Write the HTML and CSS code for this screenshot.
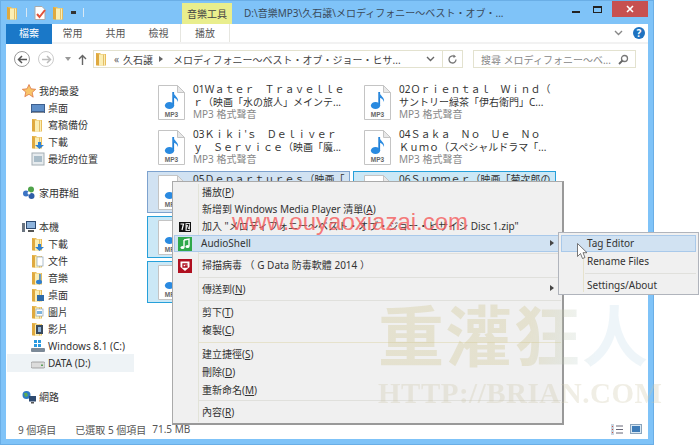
FILE: index.html
```html
<!DOCTYPE html>
<html lang="zh-Hant">
<head>
  <meta charset="UTF-8">
  <title>音樂工具</title>
  <link rel="stylesheet" href="styles.css">
</head>
<body>

  <svg class="defs" width="0" height="0">
    <symbol id="folder" viewBox="0 0 14 14">
      <path d="M1 1h4l1 1h5v11.500H1z" fill="#e9bd5c"/>
      <path d="M4 2.500h6v11H4z" fill="#fbeeb4"/>
      <path d="M1 1l3 1.500v11l-3-.5z" fill="#dfa93f"/>
      <path d="M8.500 2.500v11" stroke="#e3bf6a" stroke-width="1"/>
    </symbol>
    <symbol id="mp3" viewBox="0 0 27 35">
      <path d="M.5.500h19l7 7v27H.5z" fill="#fff" stroke="#c4c4c4"/>
      <path d="M19.500.500v7h7z" fill="#e8e8e8" stroke="#c4c4c4"/>
      <path d="M15.200 7v14" stroke="#1f7fd6" stroke-width="1.800" fill="none"/>
      <path d="M15 7c1 4 6 5 5 10-1-3-3-4-5-4.500z" fill="#2a8ae0"/>
      <ellipse cx="11.500" cy="20.500" rx="4.600" ry="3.600" fill="#2a8ae0"/>
      <text x="13.500" y="32" class="mp3-label">MP3</text>
    </symbol>
  </svg>

  <div class="window">
    <div class="titlebar">
      <div class="quick">
        <svg class="ico"><use href="#folder"/></svg>
        <span class="qbar"></span>
        <svg class="ico" viewBox="0 0 14 14"><path d="M2 .5h7l3 3v10H2z" fill="#fff" stroke="#aaa"/><path d="M4 8l2.500 3L12 4" stroke="#e0523a" stroke-width="2" fill="none"/></svg>
        <svg class="ico"><use href="#folder"/></svg>
        <span class="qdrop"></span>
        <span class="qbar"></span>
      </div>
      <div class="tool-tab">音樂工具</div>
      <div class="title">D:\音樂MP3\久石譲\メロディフォニー～ベスト・オブ・...</div>
      <div class="controls">
        <span class="btn-min"></span>
        <span class="btn-max"></span>
        <span class="btn-close">
          <svg width="8" height="8" viewBox="0 0 8 8"><path d="M1 1l6 6M7 1L1 7" stroke="#fff" stroke-width="1.600"/></svg>
        </span>
      </div>
    </div>

    <div class="inner">
      <div class="tabs">
        <div class="tab tab-file">檔案</div>
        <div class="tab">常用</div>
        <div class="tab">共用</div>
        <div class="tab">檢視</div>
        <div class="tab tab-play">播放</div>
        <svg class="ribbon-chev" width="9" height="6" viewBox="0 0 9 6"><path d="M1 1l3.500 3.500L8 1" stroke="#888" stroke-width="1.400" fill="none"/></svg>
        <span class="help">?</span>
      </div>

      <div class="navrow">
        <span class="nav-circle"><svg width="11" height="9" viewBox="0 0 11 9"><path d="M5 1L1.500 4.500 5 8M2 4.500h8" stroke="#555" stroke-width="1.500" fill="none"/></svg></span>
        <span class="nav-circle nav-off"><svg width="11" height="9" viewBox="0 0 11 9"><path d="M6 1l3.500 3.500L6 8M9 4.500H1" stroke="#bbb" stroke-width="1.500" fill="none"/></svg></span>
        <span class="nav-drop"></span>
        <svg class="nav-up" width="9" height="11" viewBox="0 0 9 11"><path d="M1 5l3.500-3.500L8 5M4.500 2v9" stroke="#666" stroke-width="1.400" fill="none"/></svg>
        <div class="address">
          <svg class="ico"><use href="#folder"/></svg>
          <span class="crumb-more">«</span>
          <span>久石譲</span>
          <span class="crumb-arrow"></span>
          <span class="crumb-long">メロディフォニー～ベスト・オブ・ジョー・ヒサ...</span>
          <svg class="addr-chev" width="9" height="6" viewBox="0 0 9 6"><path d="M1 1l3.500 3.500L8 1" stroke="#666" stroke-width="1.400" fill="none"/></svg>
          <span class="addr-refresh">
            <svg width="11" height="11" viewBox="0 0 11 11"><path d="M9 5.500A3.500 3.500 0 1 1 7.500 2.600" stroke="#777" stroke-width="1.300" fill="none"/><path d="M6.500.5l2.500 2-2.500 1.500z" fill="#777"/></svg>
          </span>
        </div>
        <div class="search">
          <span>搜尋 メロディフォニー～ベ...</span>
          <svg width="11" height="11" viewBox="0 0 11 11"><circle cx="6.500" cy="4.500" r="3" stroke="#777" stroke-width="1.300" fill="none"/><path d="M4.500 6.500L1 10" stroke="#666" stroke-width="1.800"/></svg>
        </div>
      </div>

      <div class="panes">
        <div class="sidebar">
          <div class="side-row head">
            <svg class="ico" viewBox="0 0 14 14"><path d="M7 .5l2 4.300 4.700.5-3.500 3.200 1 4.700L7 10.300l-4.200 2.400 1-4.700L.3 5.300 5 4.800z" fill="#f8c56a" stroke="#d9683a" stroke-width=".7"/></svg>
            <span>我的最愛</span>
          </div>
          <div class="side-row">
            <svg class="ico" viewBox="0 0 14 14"><rect y="3" width="14" height="9" fill="#3d5f8e"/><rect x="1" y="4" width="12" height="6" fill="#5f8fc8"/><rect x="1" y="11" width="12" height="1" fill="#8a8f96"/></svg>
            <span>桌面</span>
          </div>
          <div class="side-row"><svg class="ico"><use href="#folder"/></svg><span>寫稿備份</span></div>
          <div class="side-row">
            <svg class="ico" viewBox="0 0 14 14"><use href="#folder" width="14" height="14"/><path d="M7 7h3v3h3l-4.500 4L4 10h3z" fill="#2f80d0"/></svg>
            <span>下載</span>
          </div>
          <div class="side-row">
            <svg class="ico" viewBox="0 0 14 14"><rect x="1" y="1" width="12" height="12" fill="#e6ebee" stroke="#a4aeb4"/><rect x="3" y="4" width="8" height="6" fill="#a9bcc8"/></svg>
            <span>最近的位置</span>
          </div>

          <div class="side-row head gap">
            <svg class="ico" viewBox="0 0 14 14"><circle cx="4" cy="7.500" r="3" fill="#3c74c4"/><circle cx="9" cy="3.500" r="3" fill="#4fa34a"/><circle cx="9.500" cy="10" r="3" fill="#2e5da8"/><circle cx="7" cy="7" r="1.500" fill="#fff"/></svg>
            <span>家用群組</span>
          </div>

          <div class="side-row head gap">
            <svg class="ico" viewBox="0 0 14 14"><rect x="4" y="1" width="10" height="8" fill="#2e4a70"/><rect x="5" y="2" width="8" height="6" fill="#8fb4dc"/><rect x="6" y="10" width="6" height="2" fill="#555"/><rect y="3" width="3" height="9" fill="#6a7480"/></svg>
            <span>本機</span>
          </div>
          <div class="side-row">
            <svg class="ico" viewBox="0 0 14 14"><use href="#folder" width="14" height="14"/><path d="M7 7h3v3h3l-4.500 4L4 10h3z" fill="#2f80d0"/></svg>
            <span>下載</span>
          </div>
          <div class="side-row">
            <svg class="ico" viewBox="0 0 14 14"><use href="#folder" width="14" height="14"/><rect x="6" y="3" width="6" height="9" fill="#fff" stroke="#8ea4b8" stroke-width=".7"/></svg>
            <span>文件</span>
          </div>
          <div class="side-row">
            <svg class="ico" viewBox="0 0 14 14"><use href="#folder" width="14" height="14"/><path d="M9 3v8" stroke="#2f80d0" stroke-width="1.400"/><ellipse cx="8" cy="11" rx="3" ry="2.200" fill="#2f80d0"/></svg>
            <span>音樂</span>
          </div>
          <div class="side-row">
            <svg class="ico" viewBox="0 0 14 14"><use href="#folder" width="14" height="14"/><rect x="6" y="7" width="7" height="6" fill="#2e6aa8"/></svg>
            <span>桌面</span>
          </div>
          <div class="side-row">
            <svg class="ico" viewBox="0 0 14 14"><use href="#folder" width="14" height="14"/><rect x="5" y="4" width="7" height="7" fill="#fff" stroke="#8ea4b8" stroke-width=".7"/><rect x="6" y="6" width="5" height="3" fill="#7db4e0"/></svg>
            <span>圖片</span>
          </div>
          <div class="side-row">
            <svg class="ico" viewBox="0 0 14 14"><use href="#folder" width="14" height="14"/><rect x="5" y="3" width="7" height="9" fill="#3a4a5c"/><rect x="7" y="5" width="3" height="5" fill="#8fb4dc"/></svg>
            <span>影片</span>
          </div>
          <div class="side-row">
            <svg class="ico" viewBox="0 0 14 14"><path d="M3 1h3v3H3zM7 1h3v3H7zM3 5h3v3H3zM7 5h3v3H7z" fill="#2a9ae0"/><rect y="9" width="14" height="4" rx="1" fill="#7c8a98"/></svg>
            <span>Windows 8.1 (C:)</span>
          </div>
          <div class="side-row current">
            <svg class="ico" viewBox="0 0 14 14"><rect y="6" width="14" height="6" rx="1.500" fill="#dcdcdc" stroke="#888" stroke-width=".7"/><rect x="10" y="8.500" width="2" height="1.500" fill="#5aa05a"/></svg>
            <span>DATA (D:)</span>
          </div>

          <div class="side-row head gap">
            <svg class="ico" viewBox="0 0 14 14"><circle cx="4.500" cy="5" r="4" fill="#2e7cc4"/><path d="M2 3l3 0 1 3-3 1z" fill="#5cac54"/><rect x="7" y="6" width="7" height="5.500" fill="#2e4a70"/><rect x="9" y="12" width="3" height="1.500" fill="#555"/></svg>
            <span>網路</span>
          </div>
        </div>

        <div class="files">
          <div class="tile">
            <svg class="mp3"><use href="#mp3"/></svg>
            <div class="tile-text">
              <div>01Ｗａｔｅｒ　Ｔｒａｖｅｌｌｅ</div>
              <div>ｒ（映画「水の旅人」メインテ...</div>
              <div class="type">MP3 格式聲音</div>
            </div>
          </div>
          <div class="tile">
            <svg class="mp3"><use href="#mp3"/></svg>
            <div class="tile-text">
              <div>02Ｏｒｉｅｎｔａｌ　Ｗｉｎｄ（</div>
              <div>サントリー緑茶「伊右衛門」C...</div>
              <div class="type">MP3 格式聲音</div>
            </div>
          </div>
          <div class="tile">
            <svg class="mp3"><use href="#mp3"/></svg>
            <div class="tile-text">
              <div>03Ｋｉｋｉ'ｓ　Ｄｅｌｉｖｅｒ</div>
              <div>ｙ　Ｓｅｒｖｉｃｅ（映画「魔...</div>
              <div class="type">MP3 格式聲音</div>
            </div>
          </div>
          <div class="tile">
            <svg class="mp3"><use href="#mp3"/></svg>
            <div class="tile-text">
              <div>04Ｓａｋａ　Ｎｏ　Ｕｅ　Ｎｏ</div>
              <div>Ｋｕｍｏ（スペシャルドラマ「...</div>
              <div class="type">MP3 格式聲音</div>
            </div>
          </div>
          <div class="tile focus">
            <svg class="mp3"><use href="#mp3"/></svg>
            <div class="tile-text">
              <div>05Ｄｅｐａｒｔｕｒｅｓ（映画「</div>
            </div>
          </div>
          <div class="tile selected">
            <svg class="mp3"><use href="#mp3"/></svg>
            <div class="tile-text">
              <div>06Ｓｕｍｍｅｒ（映画「菊次郎の</div>
            </div>
          </div>
          <div class="tile selected"><svg class="mp3"><use href="#mp3"/></svg></div>
          <div class="tile selected"><svg class="mp3"><use href="#mp3"/></svg></div>
          <div class="tile selected"><svg class="mp3"><use href="#mp3"/></svg></div>
        </div>
      </div>

      <div class="status">
        <span>9 個項目</span>
        <span class="status-sel">已選取 5 個項目</span>
        <span>71.5 MB</span>
        <div class="views">
          <svg width="12" height="11" viewBox="0 0 12 11"><path d="M0 0h3v11H0z" fill="#c8d4e0"/><path d="M1 2h1v1H1zM1 5h1v1H1zM1 8h1v1H1z" fill="#d05040"/><path d="M5 2h7M5 5.500h7M5 9h7" stroke="#667" stroke-width="1"/></svg>
          <svg width="12" height="10" viewBox="0 0 12 10"><rect x=".5" y=".5" width="11" height="9" fill="#d8e8f4" stroke="#8aa4bc"/><rect x="2" y="2" width="8" height="6" fill="#3e7cb8"/></svg>
        </div>
      </div>
    </div>
  </div>

  <div class="menu">
    <div class="menu-row">播放(<u>P</u>)</div>
    <div class="menu-row">新增到 Windows Media Player 清單(<u>A</u>)</div>
    <div class="menu-row">
      <svg class="menu-ico" viewBox="0 0 14 14"><rect x="1" y="2" width="12" height="10" fill="#111"/><rect x="7.500" y="3" width="4.500" height="8" fill="#ddd"/><path d="M2.500 4h3L4 10" stroke="#fff" stroke-width="1.200" fill="none"/><path d="M8.500 4.500h2.500L9 9.500h2.500" stroke="#111" stroke-width="1" fill="none"/></svg>
      加入 "メロディフォニー～ベスト・オブ・ジョー・ヒサイシ Disc 1.zip"
    </div>
    <div class="menu-row active">
      <svg class="menu-ico" viewBox="0 0 14 14"><rect width="14" height="14" fill="#2fa84a"/><path d="M6 3l5-1v7" stroke="#fff" stroke-width="1.400" fill="none"/><path d="M6 3v7" stroke="#fff" stroke-width="1.400"/><ellipse cx="4.500" cy="10.500" rx="2" ry="1.500" fill="#fff"/><ellipse cx="9.500" cy="9.500" rx="2" ry="1.500" fill="#fff"/></svg>
      <span class="audio-label">AudioShell</span>
      <span class="arrow"></span>
    </div>
    <div class="menu-sep"></div>
    <div class="menu-row scan">
      <svg class="menu-ico" viewBox="0 0 14 14"><rect width="14" height="14" fill="#b01020"/><path d="M2.500 2.500h9v5.500L7 12 2.500 8z" fill="#fff"/><path d="M9.500 5H5v3h4V7H7" stroke="#b01020" stroke-width="1.300" fill="none"/></svg>
      掃描病毒 （ G Data 防毒軟體 2014 ）
    </div>
    <div class="menu-sep"></div>
    <div class="menu-row send">傳送到(<u>N</u>)<span class="arrow"></span></div>
    <div class="menu-sep"></div>
    <div class="menu-row tall">剪下(<u>T</u>)</div>
    <div class="menu-row tall">複製(<u>C</u>)</div>
    <div class="menu-sep sep-wide"></div>
    <div class="menu-row tall">建立捷徑(<u>S</u>)</div>
    <div class="menu-row tall">刪除(<u>D</u>)</div>
    <div class="menu-row tall">重新命名(<u>M</u>)</div>
    <div class="menu-sep"></div>
    <div class="menu-row last">內容(<u>R</u>)</div>
  </div>

  <div class="submenu">
    <div class="sub-row active">Tag Editor</div>
    <div class="sub-row">Rename Files</div>
    <div class="sub-sep"></div>
    <div class="sub-row">Settings/About</div>
  </div>

  <svg class="cursor" width="11" height="17" viewBox="0 0 11 17"><path d="M.5.500v13l3-3 2 5 2.500-1-2-4.800h4z" fill="#fff" stroke="#555" stroke-width=".8"/></svg>

  <div class="mark-red">www.ouyaoxiazai.com</div>
  <div class="mark-brian">重灌狂人</div>
  <div class="mark-url">HTTP://BRIAN.COM</div>

</body>
</html>
```

FILE: styles.css
```css
* { box-sizing: border-box; }
html, body { margin: 0; height: 100%; }
body {
  position: relative;
  width: 700px;
  height: 446px;
  overflow: hidden;
  background: #fff;
  font-family: "Noto Sans", "Noto Sans CJK TC", sans-serif;
  font-size: 10px;
  color: #333;
  filter: blur(.35px);
}
.defs { position: absolute; }
.ico { width: 14px; height: 14px; flex: none; }
.mp3-label { font: bold 6.500px "Liberation Sans", sans-serif; fill: #666; text-anchor: middle; }

.window {
  width: 654px;
  height: 445px;
  background: #7fc3f8;
  border: 1px solid #6aaee6;
  display: flex;
  flex-direction: column;
}

/* title bar */
.titlebar { height: 23px; display: flex; flex: none; }
.quick { width: 181px; display: flex; align-items: center; gap: 5px; padding-left: 5px; }
.qbar { width: 1px; height: 9px; background: #d8e8f4; margin: 0 1px; }
.qdrop { width: 5px; height: 3px; border-top: 3px solid #333; margin-right: 1px; }
.tool-tab {
  width: 50px;
  margin-top: 2px;
  background: #e9ee8d;
  text-align: center;
  line-height: 22px;
  color: #444;
}
.title { margin-left: 12px; line-height: 24px; color: #3a4a5a; white-space: nowrap; }
.controls { margin-left: auto; margin-right: 5px; display: flex; height: 16px; }
.btn-min { width: 8px; height: 2px; background: #222; margin: 10px 13px 0 0; }
.btn-max { width: 9px; height: 7px; border: 1px solid #222; border-top-width: 2px; margin: 5px 10px 0 0; }
.btn-close {
  width: 36px;
  background: #c75050;
  display: flex;
  align-items: center;
  justify-content: center;
}

.inner {
  flex: 1;
  margin: 0 5px 5px;
  background: #fff;
  display: flex;
  flex-direction: column;
  min-height: 0;
}

/* ribbon tabs */
.tabs { height: 20px; display: flex; align-items: center; flex: none; border-bottom: 2px solid #f2f2f2; }
.tab { width: 43px; text-align: center; color: #555; line-height: 18px; }
.tab-file { width: 46px; height: 20px; line-height: 19px; margin-right: 0; background: #1a78c8; color: #fff; align-self: flex-start; }
.tab-play {
  width: 50px;
  margin-left: 0;
  height: 18px;
  border-left: 1px solid #e6e6e0;
  border-right: 1px solid #e6e6e0;
}
.tab:nth-child(2) { margin-left: -1px; }
.ribbon-chev { margin-left: auto; margin-right: 10px; }
.help {
  width: 12px;
  height: 12px;
  border-radius: 50%;
  background: #1e72c0;
  color: #fff;
  font-weight: bold;
  text-align: center;
  line-height: 12px;
  margin-right: 3px;
}

/* address row */
.navrow { height: 30px; display: flex; align-items: center; flex: none; padding-left: 8px; }
.nav-circle {
  width: 16px;
  height: 16px;
  border: 1px solid #999;
  border-radius: 50%;
  display: flex;
  align-items: center;
  justify-content: center;
  margin-right: 8px;
}
.nav-off { border-color: #ccc; }
.nav-drop { width: 0; height: 0; border: 3px solid transparent; border-top: 4px solid #999; margin: 3px 7px 0 3px; }
.nav-up { margin-right: 6px; }
.address {
  width: 370px;
  height: 18px;
  border: 1px solid #e3e2cf;
  display: flex;
  align-items: center;
  padding-left: 1px;
  white-space: nowrap;
  color: #444;
}
.crumb-more { margin: 0 4px 0 5px; color: #666; }
.crumb-arrow { width: 0; height: 0; border: 3px solid transparent; border-left: 4px solid #666; margin: 0 4px 0 6px; }
.crumb-long { margin-left: 3px; }
.addr-chev { margin-left: auto; margin-right: 7px; }
.addr-refresh { width: 20px; height: 16px; border-left: 1px solid #e3e2cf; display: flex; align-items: center; justify-content: center; }
.search {
  width: 163px;
  height: 18px;
  margin-left: 10px;
  border: 1px solid #e3e2cf;
  display: flex;
  align-items: center;
  justify-content: space-between;
  padding: 0 6px 0 7px;
  color: #888;
  white-space: nowrap;
}

/* panes */
.panes { flex: 1; display: flex; min-height: 0; }
.sidebar { width: 141px; flex: none; padding-top: 8px; }
.side-row { height: 17px; display: flex; align-items: center; gap: 3px; padding-left: 25px; color: #333; white-space: nowrap; }
.side-row.head { padding-left: 16px; }
.side-row.gap { margin-top: 17px; }
.side-row.current { background: #eef3f6; width: 127px; margin-left: 1px; padding-left: 24px; height: 18px; margin-bottom: -1px; }
.files {
  flex: 1;
  padding-top: 7px;
  display: grid;
  grid-template-columns: 206px 206px;
  grid-auto-rows: 45px;
  align-content: start;
}
.tile {
  width: 203px;
  height: 42px;
  display: flex;
  gap: 8px;
  padding: 3px 0 0 10px;
  border: 1px solid transparent;
}
.tile.focus { background: #d1e2f2; border-color: #7da2ce; }
.tile.selected { background: #cbe8f6; border-color: #26a0da; }
.mp3 { width: 27px; height: 35px; flex: none; }
.tile-text { margin-top: -2px; line-height: 12.500px; white-space: nowrap; color: #333; }
.type { color: #888; }

/* status bar */
.status { height: 20px; flex: none; display: flex; align-items: center; padding-left: 12px; color: #555; white-space: nowrap; }
.status-sel { margin: 0 6px 0 19px; }
.views { margin-left: auto; display: flex; gap: 7px; margin-right: 6px; align-items: center; }

/* context menu, sits over the window */
.menu {
  position: absolute;
  left: 172px;
  top: 181px;
  width: 392px;
  height: 244px;
  padding: 2px 1px 1px;
  background: #f0f0f0 linear-gradient(#e2e3d8, #e2e3d8) 25px 2px / 1px 238px no-repeat;
  border: 1px solid #aaa;
  border-right: 2px solid #999;
  border-bottom: 2px solid #999;
  color: #333;
  white-space: nowrap;
}
.menu-row { position: relative; height: 17px; line-height: 17px; padding-left: 28px; }
.menu-row.active { background: #d1e2f2; outline: 1px solid #a9c9ea; outline-offset: -1px; }
.menu-row.scan { height: 20px; line-height: 19px; }
.menu-row.send { height: 19px; line-height: 18px; }
.menu-row.tall { height: 18px; line-height: 18px; }
.menu-row.last { height: 20px; line-height: 19px; }
.audio-label { margin-left: -1px; }
.menu-ico { position: absolute; left: 4px; top: 2px; width: 14px; height: 14px; }
.menu-row.scan .menu-ico { top: 3px; }
.menu-sep { height: 1px; margin: 1px 0 2px 25px; background: #e0e0dc; }
.sep-wide { margin-top: 3px; background: #e6e2cc; }
.arrow {
  position: absolute;
  right: 7px;
  top: 5px;
  width: 0;
  height: 0;
  border: 3px solid transparent;
  border-left: 4px solid #444;
  border-right: 0;
}

.submenu {
  position: absolute;
  left: 558px;
  top: 232px;
  width: 141px;
  height: 63px;
  padding: 2px;
  background: #f0f0f0 linear-gradient(#e6e2cc, #e6e2cc) 24px 2px / 1px 57px no-repeat;
  border: 1px solid #b0b4bc;
  color: #333;
}
.sub-row { height: 17px; line-height: 17px; padding-left: 26px; white-space: nowrap; }
.sub-row.active { background: #d1e2f2; outline: 1px solid #a9c9ea; outline-offset: -1px; }
.sub-row + .sub-row { margin-top: 1px; }
.sub-sep { height: 1px; margin: 3px 0 3px 24px; background: #e0e0dc; }

.cursor { position: absolute; left: 577px; top: 243px; }

/* watermarks laid over the screenshot */
.mark-red {
  position: absolute;
  left: 232px;
  top: 208px;
  font: 24px/28px "Liberation Sans", sans-serif;
  color: rgba(245, 90, 90, .8);
  white-space: nowrap;
}
.mark-brian {
  position: absolute;
  left: 378px;
  top: 290px;
  font: 700 66px/84px "Noto Sans CJK TC", sans-serif;
  letter-spacing: 2px;
  white-space: nowrap;
  background: linear-gradient(100deg, rgba(205, 195, 140, .33) 55%, rgba(170, 205, 225, .2) 80%);
  -webkit-background-clip: text;
  background-clip: text;
  color: transparent;
}
.mark-url {
  position: absolute;
  left: 378px;
  top: 377px;
  font: 700 29px/32px "Liberation Serif", serif;
  white-space: nowrap;
  letter-spacing: .5px;
  color: rgba(205, 200, 170, .3);
}
```
